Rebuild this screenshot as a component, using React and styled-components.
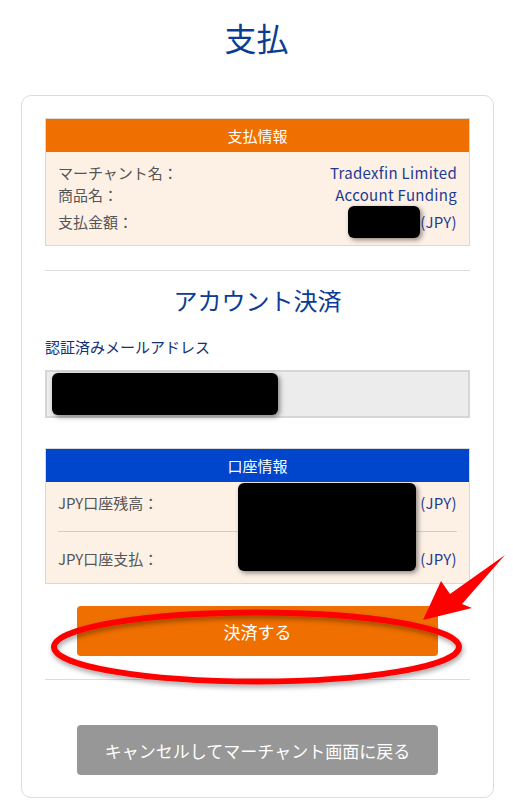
import React from 'react';
import styled, {createGlobalStyle} from 'styled-components';

const GlobalStyle = createGlobalStyle`
  body {
    margin: 0;
    padding: 0;
    background: #fff;
    font-family: 'Noto Sans CJK JP', 'Noto Sans', sans-serif;
  }
`;

const Page = styled.div`
  position: relative;
  width: 513px;
  min-height: 810px;
`;

const Title = styled.h1`
  margin: 17px 0 38px;
  font-size: 32px;
  line-height: 40px;
  font-weight: 400;
  text-align: center;
  color: #0b3c94;
`;

const Card = styled.div`
  margin: 0 19px 0 21px;
  border: 1px solid #dcdcdc;
  border-radius: 10px;
  padding: 22px 23px 22px;
`;

const InfoTable = styled.div`
  border: 1px solid #d8d8d8;
  background: #fdf1e6;
`;

const TableHead = styled.div`
  height: 33px;
  line-height: 33px;
  text-align: center;
  color: #fff;
  font-size: 15px;
  background: ${p => p.$color};
`;

const TableBody = styled.div`
  position: relative;
  padding: ${p => p.$padding};
`;

const Row = styled.div`
  display: flex;
  justify-content: space-between;
  align-items: center;
  min-height: 22px;
  font-size: 15px;
  line-height: 22px;
`;

const Label = styled.span`
  color: #555;
`;

const Value = styled.span`
  display: flex;
  align-items: center;
  color: #1d3a93;
  letter-spacing: 0.3px;
`;

const Redact = styled.span`
  display: inline-block;
  width: ${p => p.$w}px;
  height: ${p => p.$h}px;
  background: #000;
  border-radius: 6px;
  box-shadow: 2px 2px 5px rgba(0, 0, 0, 0.45);
`;

const BigRedact = styled(Redact)`
  position: absolute;
  top: 1px;
  right: 53px;
`;

const RowLine = styled.div`
  height: 1px;
  background: #cfcfcf;
  margin: 17px 0 16px;
`;

const Divider = styled.hr`
  border: 0;
  height: 1px;
  background: #dcdcdc;
  margin: ${p => p.$margin};
`;

const SubTitle = styled.h2`
  margin: 13px 0 21px;
  font-size: 24px;
  line-height: 32px;
  font-weight: 400;
  text-align: center;
  color: #0b3c94;
`;

const FieldLabel = styled.div`
  font-size: 15px;
  line-height: 20px;
  color: #123278;
  margin-bottom: 13px;
`;

const Input = styled.div`
  box-sizing: border-box;
  height: 48px;
  background: #ececec;
  border: 2px solid #d6d6d6;
  padding: 1px 5px;
  margin-bottom: 30px;
`;

const Button = styled.button`
  display: block;
  width: 361px;
  height: 50px;
  margin: ${p => p.$margin};
  border: 0;
  border-radius: 4px;
  background: ${p => p.$bg};
  color: #fff;
  font-family: inherit;
  font-size: 17px;
`;

const Overlay = styled.svg`
  position: absolute;
  top: 0;
  left: 0;
  pointer-events: none;
`;

const App = () => {
  return (
    <Page>
      <GlobalStyle />
      <Title>支払</Title>
      <Card>
        <InfoTable>
          <TableHead $color="#ef6f00">支払情報</TableHead>
          <TableBody $padding="10px 12px 7px">
            <Row>
              <Label>マーチャント名：</Label>
              <Value>Tradexfin Limited</Value>
            </Row>
            <Row>
              <Label>商品名：</Label>
              <Value>Account Funding</Value>
            </Row>
            <Row>
              <Label>支払金額：</Label>
              <Value>
                <Redact $w={72} $h={32} />
                (JPY)
              </Value>
            </Row>
          </TableBody>
        </InfoTable>

        <Divider $margin="24px 0 0" />
        <SubTitle>アカウント決済</SubTitle>
        <FieldLabel>認証済みメールアドレス</FieldLabel>
        <Input>
          <Redact $w={226} $h={42} />
        </Input>

        <InfoTable>
          <TableHead $color="#0046cc">口座情報</TableHead>
          <TableBody $padding="10px 12px 13px">
            <Row>
              <Label>JPY口座残高：</Label>
              <Value>(JPY)</Value>
            </Row>
            <RowLine />
            <Row>
              <Label>JPY口座支払：</Label>
              <Value>(JPY)</Value>
            </Row>
            <BigRedact $w={178} $h={88} />
          </TableBody>
        </InfoTable>

        <Button $bg="#ef6f00" $margin="22px auto 0">決済する</Button>
        <Divider $margin="23px 0 45px" />
        <Button $bg="#979797" $margin="0 auto">キャンセルしてマーチャント画面に戻る</Button>
      </Card>

      <Overlay width="513" height="810" viewBox="0 0 513 810">
        <defs>
          <filter id="shadow" x="-10%" y="-30%" width="120%" height="160%">
            <feDropShadow dx="1" dy="3" stdDeviation="2.5" floodColor="#000" floodOpacity="0.35" />
          </filter>
        </defs>
        <ellipse
          cx="256.5"
          cy="630"
          rx="202.5"
          ry="34.5"
          fill="none"
          stroke="#ff0000"
          strokeWidth="6"
          filter="url(#shadow)"
        />
        <polygon
          points="423,603 441,564 450,577 505,538 462,587 472,591"
          fill="#ff0000"
        />
      </Overlay>
    </Page>
  );
};

export default App;
